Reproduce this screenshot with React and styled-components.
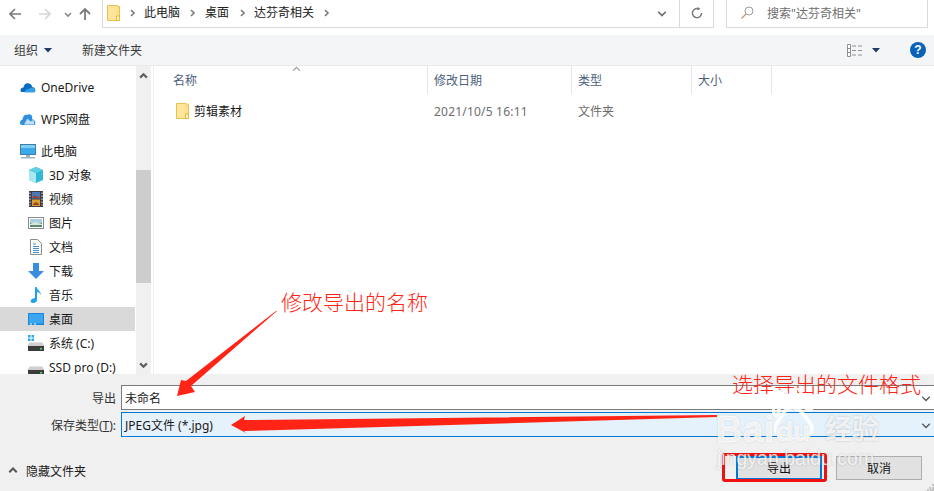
import React from "react";
import styled, { createGlobalStyle } from "styled-components";

const Global = createGlobalStyle`
  html, body { margin: 0; padding: 0; background: #fff; }
  body { width: 934px; height: 491px; overflow: hidden; font-family: "Noto Sans", "Noto Sans CJK SC", sans-serif; font-size: 12px; color: #1a1a1a; }
  * { box-sizing: border-box; }
`;

const Window = styled.div`
  position: relative; width: 934px; height: 491px; overflow: hidden;
  display: flex; flex-direction: column; background: #fff;
`;

/* address row */
const AddressRow = styled.div`height: 35px; display: flex; align-items: flex-start; background: #fff;`;
const Nav = styled.div`width: 102px; height: 27px; display: flex; align-items: center; flex: none;`;
const NavSlot = styled.div`
  width: ${p => p.$w}px; margin-left: ${p => p.$ml || 0}px; height: 14px; flex: none;
  display: flex; align-items: center; justify-content: center;
`;
const AddressBox = styled.div`
  width: 612px; height: 28px; flex: none; display: flex; align-items: center;
  border: 1px solid #d9d9d9; border-top: none; padding-left: 4px; padding-bottom: 2px;
`;
const Crumb = styled.span`font-size: 12px; color: #202020; margin: 0 ${p => p.$mr ?? 7}px 0 ${p => p.$ml ?? 7}px; line-height: 16px;`;
const CrumbSep = styled.span`display: flex; margin-left: ${p => p.$ml || 0}px;`;
const AddressEnd = styled.div`margin-left: auto; display: flex; align-items: center; height: 27px; margin-bottom: -2px;`;
const DropSlot = styled.div`width: 34px; height: 100%; display: flex; align-items: center; justify-content: center; padding-bottom: 2px;`;
const RefreshSlot = styled.div`width: 34px; height: 100%; border-left: 1px solid #d9d9d9; display: flex; align-items: center; justify-content: center; padding-bottom: 2px;`;
const SearchBox = styled.div`
  margin-left: 12px; width: 202px; height: 28px; flex: none; display: flex; align-items: center;
  border: 1px solid #d9d9d9; border-top: none; padding: 0 0 2px 14px; color: #6d6d6d; font-size: 12px; gap: 13px;
`;

/* toolbar */
const Toolbar = styled.div`
  height: 31px; background: #f4f5f7; border-bottom: 1px solid #e8e9ea; display: flex; align-items: center;
  padding: 0 8px 0 14px; font-size: 12px; color: #3a3a3a;
`;
const ToolButton = styled.div`display: flex; align-items: center; gap: 6px; margin-right: ${p => p.$mr || 0}px;`;
const ToolRight = styled.div`margin-left: auto; display: flex; align-items: center; gap: 9px;`;

/* main */
const Main = styled.div`height: 308px; display: flex; overflow: hidden; background: #fff;`;
const Sidebar = styled.div`width: 136px; flex: none; padding-top: 9px; overflow: hidden;`;
const NavRow = styled.div`
  height: 24px; display: flex; align-items: center; white-space: nowrap; font-size: 12px; color: #1a1a1a;
  padding-left: ${p => (p.$child ? 28 : 20)}px; gap: 5px; margin-bottom: ${p => p.$mb || 0}px;
  width: 135px; background: ${p => (p.$selected ? "#d9d9d9" : "transparent")};
`;
const IconBox = styled.span`width: 16px; height: 16px; flex: none; display: flex; align-items: center; justify-content: center;`;
const ScrollTrack = styled.div`
  width: 15px; flex: none; background: #f0f0f0; display: flex; flex-direction: column; align-items: center;
`;
const ScrollArrow = styled.div`height: 20px; flex: none; margin-top: ${p => p.$mt || 0}px; display: flex; align-items: center; justify-content: center; width: 100%;`;
const ScrollThumb = styled.div`width: 15px; height: 113px; flex: none; margin-top: 84px; background: #cdcdcd;`;
const Splitter = styled.div`width: 3px; flex: none; background: #fff; border-right: 1px solid #efefef;`;
const Files = styled.div`flex: 1; min-width: 0; display: flex; flex-direction: column;`;
const HeaderRow = styled.div`display: flex; height: 28px; position: relative;`;
const HeaderCell = styled.div`
  width: ${p => p.$w}px; flex: none; border-right: 1px solid #e5e5e5; color: #4c607a; font-size: 12px;
  padding: 7px 0 0 ${p => p.$pl || 6}px; line-height: 16px;
`;
const SortCaret = styled.span`position: absolute; left: 138px; top: -1px; line-height: 0;`;
const FileRow = styled.div`display: flex; height: 24px; margin-top: 5px; align-items: center; font-size: 12px; color: #6d6d6d;`;
const NameCell = styled.div`width: 273px; flex: none; padding-left: 22px; display: flex; align-items: center; gap: 5px; color: #1a1a1a;`;
const DateCell = styled.div`width: 144px; flex: none; padding-left: 7px; letter-spacing: .2px;`;
const TypeCell = styled.div`padding-left: 7px;`;

/* bottom form */
const Bottom = styled.div`flex: 1; background: #f0f0f0; padding-top: 11px; position: relative;`;
const FormRow = styled.div`display: flex; align-items: center; height: ${p => p.$h}px; margin-bottom: ${p => p.$mb || 0}px;`;
const FormLabel = styled.div`width: 117px; flex: none; text-align: right; color: #333; font-size: 12px; padding-right: 1px;`;
const Underline = styled.span`text-decoration: underline;`;
const Field = styled.div`
  margin-left: 4px; flex: 1; height: 100%; display: flex; align-items: center; padding-left: 3px; padding-right: 3px;
  font-size: 12px; color: #1a1a1a; border: 1px solid ${p => (p.$active ? "#0078d7" : "#7a7a7a")}; border-right: none;
  background: ${p => (p.$active ? "#e5f1fb" : "#fff")};
`;
const FieldEnd = styled.span`margin-left: auto; display: flex; width: 10px;`;
const Footer = styled.div`display: flex; align-items: center; height: 24px; margin-top: 19px; padding: 0 12px 0 8px;`;
const Hide = styled.div`display: flex; align-items: center; gap: 8px; color: #1a1a1a; font-size: 12px; margin-top: 6px;`;
const Buttons = styled.div`margin-left: auto; display: flex; gap: 14px;`;
const Button = styled.div`
  width: 86px; height: 24px; display: flex; align-items: center; justify-content: center; font-size: 12px; color: #111;
  background: #e1e1e1; border: ${p => (p.$primary ? "2px solid #0078d7" : "1px solid #adadad")};
`;
const Grip = styled.svg`position: absolute; right: 0; bottom: 0;`;

/* annotations lying over the dialog */
const Arrows = styled.svg`position: absolute; left: 0; top: 0; pointer-events: none;`;
const Note = styled.div`
  position: absolute; left: ${p => p.$x}px; top: ${p => p.$y}px; color: #ff2415; font-size: 21px; line-height: 28px;
  font-family: "Noto Sans CJK SC", sans-serif; font-weight: 300; white-space: nowrap;
`;
const RedFrame = styled.div`position: absolute; left: 722px; top: 453px; width: 105px; height: 29px; border: 3px solid #f01010; border-radius: 3px;`;
const Watermark = styled.div`
  position: absolute; left: 716px; top: 388px; width: 170px; height: 82px; color: rgba(255,255,255,.8); pointer-events: none;
  text-shadow: 0 0 2px rgba(120,120,120,.45);
`;
const Bai = styled.span`position: absolute; left: 0; top: 20px; font: bold 36px/44px "Liberation Sans", sans-serif; letter-spacing: 1px; -webkit-text-stroke: .8px rgba(255,255,255,.8);`;
const Du = styled.span`position: absolute; left: 60px; top: 30px; font: bold 28px/28px "Liberation Sans", sans-serif; -webkit-text-stroke: .6px rgba(255,255,255,.8);`;
const Jing = styled.span`position: absolute; left: 109px; top: 22px; font: bold 27px/36px "Noto Sans CJK SC", sans-serif;`;
const Url = styled.span`position: absolute; left: 1px; top: 58px; font: 19.5px/24px "Liberation Sans", sans-serif; white-space: nowrap;`;
const Paw = styled.svg`position: absolute; left: 56px; top: 0;`;

/* drawings */
const Chev = ({ size = 8, color = "#7a7a7a", dir = "right", w = 1.6 }) => {
  const d = { right: "M3 1l3 3-3 3", down: "M1 3l3 3 3-3", up: "M1 5l3-3 3 3" }[dir];
  return <svg width={size} height={size} viewBox="0 0 8 8"><path d={d} fill="none" stroke={color} strokeWidth={w} /></svg>;
};
const Folder = ({ w = 13, h = 16 }) => (
  <svg width={w} height={h} viewBox="0 0 13 16">
    <path d="M.5.5h9l3 1v14H.5z" fill="#ffe08a" stroke="#e7c04e" />
    <rect x="1" y="1" width="8" height="14" fill="#fde69b" />
    <path d="M9.5 11v4.5h3V11z" fill="#fff3c8" stroke="#e0b63c" />
  </svg>
);
const Cloud = ({ c1 = "#0a6cc0", c2 = "#35a0e6" }) => (
  <svg width="16" height="12" viewBox="0 0 16 12">
    <path d="M1 11c-1.3-2 0-4.500 2.500-4.500C4 3 6.500 1.500 9 2.500c2 .5 3 2 3.200 3.500 2.300 0 3.800 2.500 2.800 5z" fill={c1} />
    <path d="M5 11.500h9.500c1.300-1.500.5-5-2.500-5-2 0-3 1-3.500 2-2-1-3.500 1-3.500 3z" fill={c2} />
  </svg>
);
const Wps = () => (
  <svg width="16" height="12" viewBox="0 0 16 12">
    <path d="M0 10c0-2 1-3 2.500-3.500C3 3 5 1 7 2c1.500-1.500 4-1 5 1 .5 1.500 0 3 0 3 3 1 4 3 3 6H2c-1 0-2-1-2-2z" fill="#2f8fe0" />
    <path d="M4 11.500l3.500-6 3 3 3-1.500 1 4.500z" fill="#bfe0f8" />
  </svg>
);
const Monitor = () => (
  <svg width="16" height="15" viewBox="0 0 16 15">
    <rect x=".5" y=".5" width="15" height="10" fill="#39a9ea" stroke="#3d7fa8" />
    <rect x="1" y="1" width="14" height="3" fill="#7fcdf5" />
    <rect x="6" y="11" width="4" height="2" fill="#9fb4c2" />
    <rect x="1" y="13" width="14" height="1.500" fill="#9fb4c2" />
  </svg>
);
const Cube = () => (
  <svg width="16" height="16" viewBox="0 0 16 16">
    <path d="M8 0l7 3v10l-7 3-7-3V3z" fill="#2db8d8" />
    <path d="M1 3l7 3v10l-7-3z" fill="#a8e8ee" />
    <path d="M8 0l7 3-7 3-7-3z" fill="#5fd0e4" />
  </svg>
);
const Film = () => (
  <svg width="14" height="16" viewBox="0 0 14 16">
    <rect width="14" height="16" fill="#3a3f47" />
    <rect x="3" y="1" width="8" height="6.500" fill="#4a78b8" />
    <rect x="3" y="8.500" width="8" height="6.500" fill="#d8a030" />
    <path d="M4 6l2-2 2 2 2-1v2H4zM4 13l3-2 3 2v1H4z" fill="#a83a28" />
    <path d="M1 1.500v13M13 1.500v13" stroke="#e0e0e0" strokeDasharray="1.500 1.500" />
  </svg>
);
const Picture = () => (
  <svg width="16" height="12" viewBox="0 0 16 12">
    <rect x=".5" y=".5" width="15" height="11" fill="#fff" stroke="#8a8a8a" />
    <rect x="2" y="2" width="12" height="4" fill="#a8cfe2" />
    <rect x="2" y="6" width="12" height="4" fill="#5a8a6a" />
    <path d="M2 7l5-2 7 2v1H2z" fill="#d9e6dc" />
  </svg>
);
const Doc = () => (
  <svg width="12" height="16" viewBox="0 0 12 16">
    <path d="M.5.500h7l4 4v11H.5z" fill="#fff" stroke="#8c8c8c" />
    <path d="M3 5h3M3 7.500h6M3 9.500h6M3 11.500h6M3 13.500h6" stroke="#3a8fd6" />
  </svg>
);
const Down = () => (
  <svg width="16" height="16" viewBox="0 0 16 16"><path d="M5 0h6v8h5l-8 8-8-8h5z" fill="#3a8ee0" /></svg>
);
const Note8 = () => (
  <svg width="12" height="16" viewBox="0 0 12 16"><path d="M5 0h1.500c.5 3 4.500 4 4.500 8-1-2-2.500-3-4-3v8c0 2-2 3-4 3s-3-1.500-2-3 3-2 4-1.500z" fill="#1ea0ee" /></svg>
);
const Desktop = () => (
  <svg width="16" height="12" viewBox="0 0 16 12">
    <rect width="16" height="12" fill="#1c86dc" />
    <rect x="1" y="1" width="14" height="9.500" fill="#3ba6f0" />
    <path d="M2 11h2M6 11h2" stroke="#fff" />
  </svg>
);
const Drive = ({ win }) => (
  <svg width="16" height="16" viewBox="0 0 16 16">
    {win && <path d="M0 0h2.500v2.500H0zM3.500 0H6v2.500H3.500zM0 3.500h2.500V6H0zM3.500 3.500H6V6H3.500z" fill="#28a8ea" />}
    <path d="M2 8h12l2 3v5H0v-5z" fill="#3c3c3c" />
    <path d="M2 7.500h12l2 3.500H0z" fill="#cfcfcf" />
    <rect x="12" y="13" width="2" height="1.500" fill="#3fe05a" />
  </svg>
);
const NavIcon = {
  Back: () => <svg width="12" height="12" viewBox="0 0 12 12"><path d="M12 6H1.500M6 1L1 6l5 5" fill="none" stroke="#7b7b7b" strokeWidth="1.600" /></svg>,
  Fwd: () => <svg width="12" height="12" viewBox="0 0 12 12"><path d="M0 6h10.500M6 1l5 5-5 5" fill="none" stroke="#d6d6d6" strokeWidth="1.600" /></svg>,
  Up: () => <svg width="12" height="12" viewBox="0 0 12 12"><path d="M6 12V1.500M1 6l5-5 5 5" fill="none" stroke="#7b7b7b" strokeWidth="1.800" /></svg>,
};
const Refresh = () => (
  <svg width="12" height="12" viewBox="0 0 12 12">
    <path d="M7.500 1.700A4.600 4.600 0 1 0 10.600 6" fill="none" stroke="#7a7a7a" strokeWidth="1.500" />
    <path d="M6.500 0l3 1.800-3 1.800z" fill="#7a7a7a" />
  </svg>
);
const Search = () => (
  <svg width="13" height="13" viewBox="0 0 13 13">
    <circle cx="8" cy="5" r="4" fill="none" stroke="#9a9a9a" />
    <path d="M5 8l-4.500 4.500" stroke="#c49a6c" strokeWidth="1.200" />
  </svg>
);
const Tri = () => <svg width="9" height="5" viewBox="0 0 9 5"><path d="M0 0h8l-4 4.500z" fill="#1f3a66" /></svg>;
const Views = () => (
  <svg width="16" height="13" viewBox="0 0 16 13">
    <path d="M.5.500h3v12h-3zM.5 4.500h3M.5 8.500h3" fill="#fff" stroke="#8f8f8f" />
    <path d="M5 2h4M11 2h4M5 6.500h4M11 6.500h4M5 11h4M11 11h4" stroke="#8f8f8f" />
  </svg>
);
const Help = styled.span`
  width: 16px; height: 16px; border-radius: 50%; background: #0a63b8; color: #fff; font: bold 12px/16px "Liberation Sans", sans-serif;
  text-align: center; margin-left: 20px; flex: none;
`;

const places = [
  [<Cube />, "3D 对象"], [<Film />, "视频"], [<Picture />, "图片"], [<Doc />, "文档"], [<Down />, "下载"],
  [<Note8 />, "音乐"], [<Desktop />, "桌面", true], [<Drive win />, "系统 (C:)"], [<Drive />, "SSD pro (D:)"],
];

export default function App() {
  return (
    <>
      <Global />
      <Window>
        <AddressRow>
          <Nav>
            <NavSlot $w={12} $ml={9}><NavIcon.Back /></NavSlot>
            <NavSlot $w={12} $ml={18}><NavIcon.Fwd /></NavSlot>
            <NavSlot $w={10} $ml={12}><Chev dir="down" color="#8a8a8a" /></NavSlot>
            <NavSlot $w={12} $ml={6}><NavIcon.Up /></NavSlot>
          </Nav>
          <AddressBox>
            <Folder />
            <CrumbSep $ml={8}><Chev /></CrumbSep>
            <Crumb $ml={8} $mr={8}>此电脑</Crumb>
            <Chev />
            <Crumb $ml={9} $mr={9}>桌面</Crumb>
            <Chev />
            <Crumb $ml={8} $mr={8}>达芬奇相关</Crumb>
            <Chev />
            <AddressEnd>
              <DropSlot><Chev size={10} dir="down" color="#6d6d6d" w={1.4} /></DropSlot>
              <RefreshSlot><Refresh /></RefreshSlot>
            </AddressEnd>
          </AddressBox>
          <SearchBox><Search />搜索"达芬奇相关"</SearchBox>
        </AddressRow>

        <Toolbar>
          <ToolButton $mr={29}>组织<Tri /></ToolButton>
          <ToolButton>新建文件夹</ToolButton>
          <ToolRight>
            <Views />
            <Tri />
            <Help>?</Help>
          </ToolRight>
        </Toolbar>

        <Main>
          <Sidebar>
            <NavRow $mb={8}><IconBox><Cloud /></IconBox>OneDrive</NavRow>
            <NavRow $mb={8}><IconBox><Wps /></IconBox>WPS网盘</NavRow>
            <NavRow><IconBox><Monitor /></IconBox>此电脑</NavRow>
            {places.map(([icon, label, sel]) => (
              <NavRow key={label} $child $selected={sel}><IconBox>{icon}</IconBox>{label}</NavRow>
            ))}
          </Sidebar>
          <ScrollTrack>
            <ScrollArrow><Chev size={9} dir="up" color="#606060" w={2} /></ScrollArrow>
            <ScrollThumb />
            <ScrollArrow $mt={71}><Chev size={9} dir="down" color="#606060" w={2} /></ScrollArrow>
          </ScrollTrack>
          <Splitter />
          <Files>
            <HeaderRow>
              <SortCaret><Chev size={9} dir="up" color="#9a9a9a" w={1} /></SortCaret>
              <HeaderCell $w={274} $pl={19}>名称</HeaderCell>
              <HeaderCell $w={144} $pl={6}>修改日期</HeaderCell>
              <HeaderCell $w={120} $pl={6}>类型</HeaderCell>
              <HeaderCell $w={80} $pl={6}>大小</HeaderCell>
            </HeaderRow>
            <FileRow>
              <NameCell><Folder />剪辑素材</NameCell>
              <DateCell>2021/10/5 16:11</DateCell>
              <TypeCell>文件夹</TypeCell>
            </FileRow>
          </Files>
        </Main>

        <Bottom>
          <FormRow $h={25} $mb={2}>
            <FormLabel>导出</FormLabel>
            <Field>未命名<FieldEnd><Chev size={10} dir="down" color="#555" w={1} /></FieldEnd></Field>
          </FormRow>
          <FormRow $h={25}>
            <FormLabel>保存类型(<Underline>T</Underline>):</FormLabel>
            <Field $active>JPEG文件 (*.jpg)<FieldEnd><Chev size={10} dir="down" color="#555" w={1} /></FieldEnd></Field>
          </FormRow>
          <Footer>
            <Hide><Chev size={10} dir="up" color="#555" w={1.6} />隐藏文件夹</Hide>
            <Buttons>
              <Button $primary>导出</Button>
              <Button>取消</Button>
            </Buttons>
          </Footer>
          <Grip width="7" height="7" viewBox="0 0 7 7"><path d="M5 0h2v2H5zM2 3h2v2H2zM5 3h2v2H5zM0 5h2v2H0zM3 5h2v2H3zM5 5h2v2H5z" fill="#c4c4c4" /></Grip>
        </Bottom>

        <Arrows width="934" height="491" viewBox="0 0 934 491">
          <path d="M277 311L191 386l4 6-18 4 4-16 5 1 90-70z" fill="#ff2415" />
          <path d="M231 425l14-9-1 4 473-5v2l-473 14 2 2z" fill="#ff2415" />
        </Arrows>
        <Note $x={281} $y={287}>修改导出的名称</Note>
        <Note $x={732} $y={369}>选择导出的文件格式</Note>
        <RedFrame />
        <Watermark>
          <Paw width="46" height="52" viewBox="0 0 46 52">
            <g fill="none" stroke="rgba(255,255,255,.85)" strokeWidth="4">
              <ellipse cx="11" cy="10" rx="4" ry="7" />
              <ellipse cx="25" cy="6" rx="4" ry="6" />
              <ellipse cx="37" cy="16" rx="4" ry="6" />
              <ellipse cx="4" cy="22" rx="3" ry="5" />
              <path d="M12 24c5-6 14-6 19 2 4 6 11 10 8 18-2 6-10 6-18 5-8 1-15 0-17-6-2-8 5-12 8-19z" />
            </g>
          </Paw>
          <Bai>Bai</Bai>
          <Du>du</Du>
          <Jing>经验</Jing>
          <Url>jingyan.baidu.com</Url>
        </Watermark>
      </Window>
    </>
  );
}
